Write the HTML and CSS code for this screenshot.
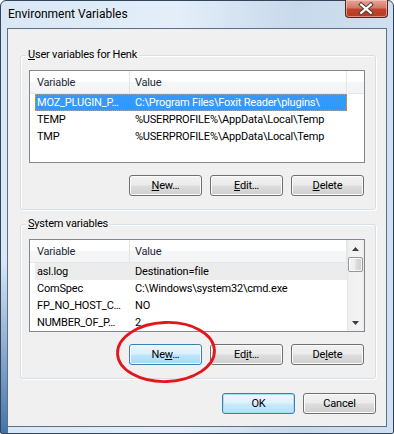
FILE: index.html
```html
<!DOCTYPE html>
<html>
<head>
<meta charset="utf-8">
<title>Environment Variables</title>
<link rel="stylesheet" href="styles.css">
</head>
<body>
<div class="window">
  <div class="titlebar">
    <span class="title">Environment Variables</span>
    <div class="close">
      <svg width="43" height="18" viewBox="0 0 43 18">
        <path d="M16.5 4.5 L26.5 13 M26.5 4.5 L16.5 13" stroke="#4a3a38" stroke-width="4.2" stroke-linecap="square" fill="none"/>
        <path d="M16.5 4.5 L26.5 13 M26.5 4.5 L16.5 13" stroke="#ffffff" stroke-width="2.2" stroke-linecap="square" fill="none"/>
      </svg>
    </div>
  </div>
  <div class="client">
    <fieldset class="group">
      <legend><u>U</u>ser variables for Henk</legend>
      <div class="list">
        <div class="lv-header">
          <div class="hcell h1">Variable</div>
          <div class="hcell h2">Value</div>
          <div class="hcell h3"></div>
        </div>
        <div class="row selected"><span class="c1">MOZ_PLUGIN_P…</span><span class="c2">C:\Program Files\Foxit Reader\plugins\</span></div>
        <div class="row"><span class="c1">TEMP</span><span class="c2">%USERPROFILE%\AppData\Local\Temp</span></div>
        <div class="row"><span class="c1">TMP</span><span class="c2">%USERPROFILE%\AppData\Local\Temp</span></div>
      </div>
      <div class="buttons">
        <button class="btn"><u>N</u>ew…</button>
        <button class="btn"><u>E</u>dit…</button>
        <button class="btn"><u>D</u>elete</button>
      </div>
    </fieldset>
    <fieldset class="group system">
      <legend><u>S</u>ystem variables</legend>
      <div class="list with-scroll">
        <div class="lv-content">
          <div class="lv-header">
            <div class="hcell h1">Variable</div>
            <div class="hcell h2 last">Value</div>
          </div>
          <div class="row inactive"><span class="c1">asl.log</span><span class="c2">Destination=file</span></div>
          <div class="row"><span class="c1">ComSpec</span><span class="c2">C:\Windows\system32\cmd.exe</span></div>
          <div class="row"><span class="c1">FP_NO_HOST_C…</span><span class="c2">NO</span></div>
          <div class="row"><span class="c1">NUMBER_OF_P…</span><span class="c2">2</span></div>
        </div>
        <div class="scrollbar">
          <div class="sb-btn"><svg width="7" height="4" viewBox="0 0 7 4"><path d="M0 4 L3.5 0 L7 4 Z" fill="#3d3d3d"/></svg></div>
          <div class="thumb"></div>
          <div class="sb-track"></div>
          <div class="sb-btn"><svg width="7" height="4" viewBox="0 0 7 4"><path d="M0 0 L7 0 L3.5 4 Z" fill="#3d3d3d"/></svg></div>
        </div>
      </div>
      <div class="buttons">
        <button class="btn hot">Ne<u>w</u>…</button>
        <button class="btn">Ed<u>i</u>t…</button>
        <button class="btn">De<u>l</u>ete</button>
      </div>
    </fieldset>
    <div class="dialog-buttons">
      <button class="btn default">OK</button>
      <button class="btn">Cancel</button>
    </div>
  </div>
  <svg class="annotation" width="104" height="66" viewBox="0 0 104 66">
    <ellipse cx="52" cy="33" rx="48.5" ry="29.5" transform="rotate(-2 52 33)" fill="none" stroke="#e3161e" stroke-width="2.8"/>
  </svg>
</div>
</body>
</html>
```
FILE: styles.css
```css
html, body {
  margin: 0;
  padding: 0;
}
body {
  width: 394px;
  height: 434px;
  overflow: hidden;
  font-family: Roboto, "Noto Sans", sans-serif;
  font-size: 11px;
  letter-spacing: -0.2px;
  color: #000;
  background: #ffffff;
}
.window {
  position: relative;
  box-sizing: border-box;
  width: 394px;
  height: 434px;
  border: 1px solid #32455c;
  border-radius: 6px 6px 2px 2px;
  display: flex;
  flex-direction: column;
  background:
    linear-gradient(to bottom, rgba(70,120,175,0) 60%, rgba(60,110,165,0.95) 100%) left top / 7px 100% no-repeat,
    linear-gradient(to right, #d9e7f5 0%, #e3eef9 45%, #c8d9eb 75%, #d0e0f0 100%);
}
.titlebar {
  flex: none;
  height: 27px;
  display: flex;
  justify-content: space-between;
  align-items: flex-start;
  padding-left: 7px;
}
.title {
  line-height: 26px;
  font-size: 12px;
  letter-spacing: 0;
  color: #000;
}
.close {
  width: 43px;
  height: 18px;
  margin-top: -1px;
  margin-right: 5px;
  box-sizing: border-box;
  border: 1px solid #5a2219;
  border-top: none;
  border-radius: 0 0 4px 4px;
  background: linear-gradient(to bottom, #e6a797 0%, #d47b66 45%, #c0432c 55%, #b73a22 100%);
  box-shadow: inset 0 0 0 1px rgba(255,210,200,0.55);
  display: flex;
}
.close svg {
  display: block;
  margin-left: -1px;
}
.client {
  flex: 1;
  margin: 0 6px 6px;
  border: 1px solid #5e7087;
  background: #f0f0f0;
  display: flex;
  flex-direction: column;
}
.group {
  margin: 19px 10px 0 12px;
  padding: 8px 10px 13px 8px;
  border: 1px solid #d5dfe5;
  border-radius: 3px;
  min-width: 0;
  box-shadow: inset 1px 1px 0 #fff, 1px 1px 0 #fff;
}
.group.system {
  margin-top: 7px;
}
.group legend {
  padding: 0 2px;
  margin-left: -3px;
  line-height: 14px;
  font-size: 11px;
}
.list {
  box-sizing: border-box;
  height: 93px;
  border: 1px solid #828790;
  background: #ffffff;
}
.list.with-scroll {
  display: flex;
}
.lv-content {
  flex: 1;
  min-width: 0;
}
.lv-header {
  display: flex;
  height: 23px;
  box-sizing: border-box;
  border-bottom: 1px solid #e4e7eb;
  background: linear-gradient(to bottom, #ffffff 0%, #ffffff 50%, #f5f6f7 50%, #f3f4f6 100%);
}
.hcell {
  box-sizing: border-box;
  line-height: 23px;
  border-right: 1px solid #e2e6eb;
  color: #1e2a38;
  white-space: nowrap;
}
.h1 {
  width: 100px;
  padding-left: 7px;
}
.h2 {
  width: 217px;
  padding-left: 5px;
}
.h2.last {
  flex: 1;
  width: auto;
}
.h3 {
  flex: 1;
  border-right: none;
}
.row {
  display: flex;
  box-sizing: border-box;
  height: 17px;
  line-height: 18px;
  margin-left: 5px;
  width: 312px;
  white-space: nowrap;
}
.row .c1 {
  box-sizing: border-box;
  width: 100px;
  padding-left: 2px;
  overflow: hidden;
}
.row .c2 {
  flex: 1;
  overflow: hidden;
}
.row.selected {
  background: #3399ff;
  color: #ffffff;
  outline: 1px dotted #d29a5a;
  outline-offset: -1px;
}
.row.inactive {
  background: #ececec;
}
.scrollbar {
  flex: none;
  width: 17px;
  display: flex;
  flex-direction: column;
  background: linear-gradient(to right, #e6e6e6 0%, #f1f1f1 15%, #f3f3f3 85%, #e8e8e8 100%);
}
.sb-btn {
  height: 17px;
  flex: none;
  display: flex;
  align-items: center;
  justify-content: center;
}
.thumb {
  flex: none;
  height: 15px;
  margin: 0 1px;
  box-sizing: border-box;
  border: 1px solid #979797;
  border-radius: 2px;
  background: linear-gradient(to right, #f4f4f4 0%, #ececec 45%, #dcdcdc 55%, #cfcfcf 100%);
  box-shadow: inset 0 0 0 1px rgba(255,255,255,0.8);
}
.sb-track {
  flex: 1;
}
.buttons {
  display: flex;
  justify-content: flex-end;
  gap: 8px;
  margin-top: 12px;
  margin-right: 1px;
}
.dialog-buttons {
  display: flex;
  justify-content: flex-end;
  gap: 8px;
  margin-top: 14px;
  padding-right: 10px;
}
.btn {
  box-sizing: border-box;
  width: 73px;
  height: 21px;
  padding: 0;
  margin: 0;
  font-family: inherit;
  font-size: 11px;
  letter-spacing: -0.2px;
  line-height: 19px;
  color: #000;
  border: 1px solid #707070;
  border-radius: 3px;
  background: linear-gradient(to bottom, #f2f2f2 0%, #ebebeb 48%, #dddddd 52%, #cfcfcf 100%);
  box-shadow: inset 0 0 0 1px #fbfbfb;
}
.btn.hot {
  border-color: #3c7fb1;
  background: linear-gradient(to bottom, #eaf6fd 0%, #d9f0fc 48%, #bee6fd 52%, #a7d9f5 100%);
}
.btn.default {
  border-color: #3c7fb1;
  background: linear-gradient(to bottom, #ecf7fd 0%, #def2fc 48%, #c9eafc 52%, #b6e0f7 100%);
  box-shadow: inset 0 0 0 1px #a8dcf5;
}
.annotation {
  position: absolute;
  left: 113px;
  top: 318px;
  pointer-events: none;
}
```
